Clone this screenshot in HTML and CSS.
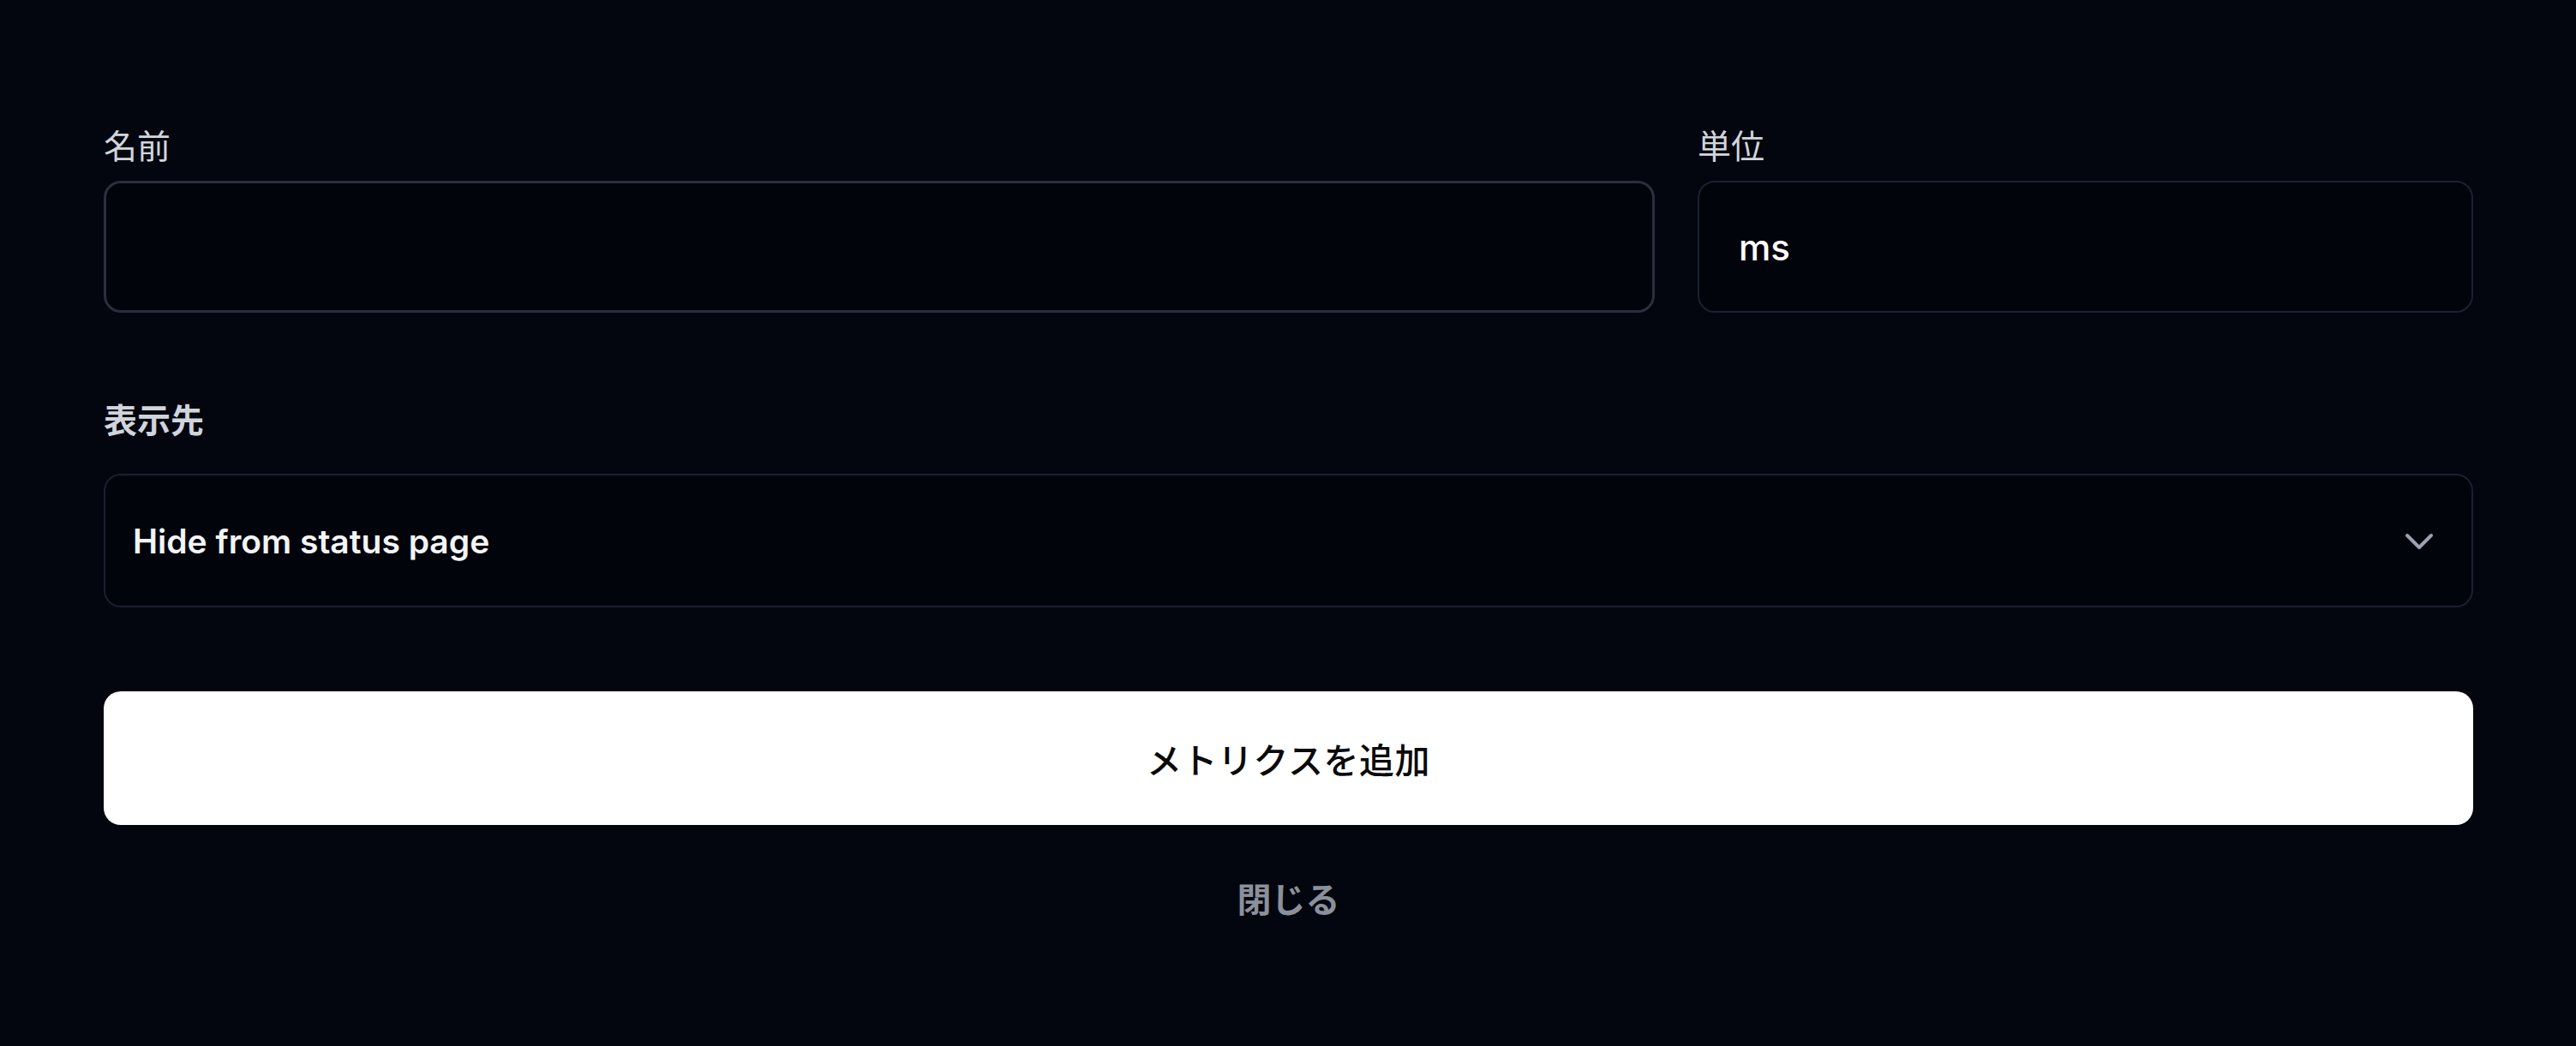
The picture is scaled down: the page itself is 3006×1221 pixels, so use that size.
FILE: index.html
```html
<!DOCTYPE html>
<html lang="ja">
<head>
<meta charset="utf-8">
<title>メトリクスを追加</title>
<link rel="stylesheet" href="styles.css">
</head>
<body>
<div class="form">
  <div class="row">
    <div class="field">
      <label class="label" for="name">名前</label>
      <input class="input input-active" id="name" type="text">
    </div>
    <div class="field">
      <label class="label" for="unit">単位</label>
      <input class="input input-unit" id="unit" type="text" value="ms">
    </div>
  </div>
  <div class="section">
    <div class="label label-strong">表示先</div>
    <div class="select">
      <span class="select-value">Hide from status page</span>
      <svg class="chevron" width="36" height="36" viewBox="0 0 36 36" fill="none" stroke="#9ca3af" stroke-width="4" stroke-linecap="round" stroke-linejoin="round"><path d="M4 10 L18 24 L32 10"/></svg>
    </div>
  </div>
  <button class="btn-primary" type="button">メトリクスを追加</button>
  <button class="btn-link" type="button">閉じる</button>
</div>
</body>
</html>
```
FILE: styles.css
```css
html, body {
  margin: 0;
  background: #03060f;
}
body {
  font-family: Inter, "Noto Sans CJK JP", sans-serif;
  min-height: 1221px;
}
.form {
  display: flex;
  flex-direction: column;
  padding: 145px 120px 0 121px;
}
.row {
  display: grid;
  grid-template-columns: 2fr 1fr;
  column-gap: 50px;
}
.field {
  display: flex;
  flex-direction: column;
}
.label {
  display: block;
  font-size: 39px;
  line-height: 52px;
  color: #d1d5db;
  margin-bottom: 14px;
}
.input {
  box-sizing: border-box;
  width: 100%;
  height: 154px;
  margin: 0;
  background: #02040c;
  border: 2px solid #1b2130;
  border-radius: 20px;
  outline: none;
  padding: 0 30px 0 46px;
  font-family: inherit;
  font-size: 42px;
  font-weight: 500;
  color: #ffffff;
}
.input-active {
  border: 3px solid #2a303b;
}
.section {
  margin-top: 100px;
  display: flex;
  flex-direction: column;
}
.label-strong {
  font-weight: 700;
  color: #d0d4db;
  margin-bottom: 36px;
}
.select {
  box-sizing: border-box;
  height: 156px;
  background: #02040c;
  border: 2px solid #1a2030;
  border-radius: 20px;
  display: flex;
  align-items: center;
  justify-content: space-between;
  padding: 0 43px 0 32px;
}
.select-value {
  font-size: 39px;
  font-weight: 600;
  color: #f3f4f6;
}
.chevron {
  display: block;
  margin-top: 4px;
}
.btn-primary {
  margin-top: 98px;
  height: 156px;
  border: none;
  border-radius: 20px;
  background: #ffffff;
  color: #0a0a0a;
  font-family: inherit;
  font-size: 41px;
  font-weight: 500;
  letter-spacing: 0.5px;
  cursor: pointer;
}
.btn-link {
  align-self: center;
  margin-top: 62px;
  padding: 0;
  border: none;
  background: none;
  color: #8b909a;
  font-family: inherit;
  font-size: 40px;
  font-weight: 700;
  line-height: 52px;
  cursor: pointer;
}
```
